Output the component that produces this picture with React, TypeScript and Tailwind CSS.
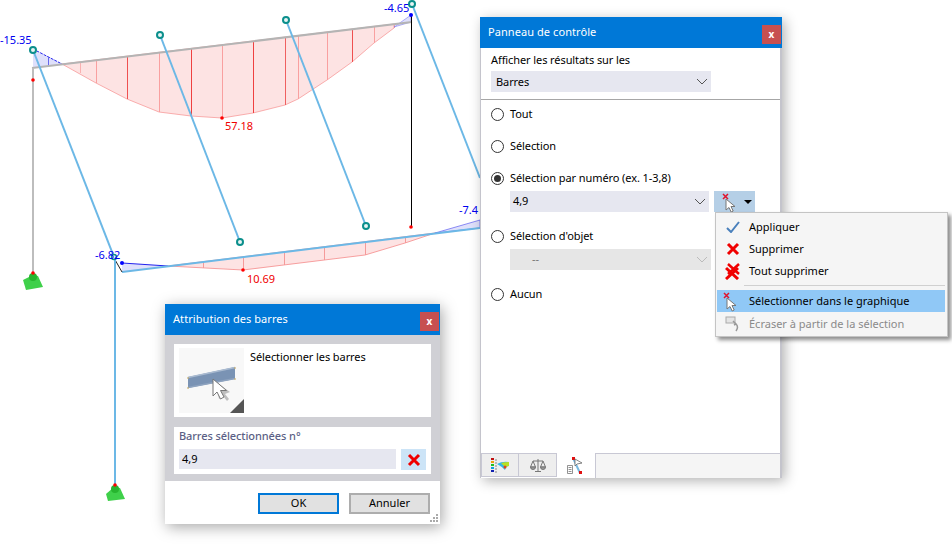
import React from "react";

const beamY = (x: number) => 68 - ((x - 32) * 46) / 380;
const lowY = (x: number) => 272 - ((x - 122) * 44) / 358;

function Chevron({ color = "#555" }: { color?: string }) {
  return (
    <svg width="12" height="7" viewBox="0 0 12 7" fill="none">
      <path d="M1 1l5 5 5-5" stroke={color} strokeWidth="1" />
    </svg>
  );
}

function Radio({ on }: { on?: boolean }) {
  return (
    <span className="w-[13px] h-[13px] rounded-full border border-[#333] bg-white flex items-center justify-center shrink-0">
      {on && <span className="w-[7px] h-[7px] rounded-full bg-[#333]" />}
    </span>
  );
}

function RadioRow({ label, on, className }: { label: string; on?: boolean; className: string }) {
  return (
    <div className={`flex items-center h-[16px] ml-[10px] gap-[6px] ${className}`}>
      <Radio on={on} />
      <span>{label}</span>
    </div>
  );
}

function CursorX() {
  return (
    <svg className="translate-y-[2px]" width="22" height="22" viewBox="0 0 22 22">
      <path d="M5 6v11l3-2.500 2.200 4.500 2-1-2.200-4.500h4z" fill="#fff" stroke="#777" strokeWidth="1" />
      <path d="M2 1l5 5M7 1L2 6" stroke="#e0142c" strokeWidth="1.500" />
    </svg>
  );
}

function RedX({ size = 14 }: { size?: number }) {
  return (
    <svg width={size} height={size} viewBox="0 0 14 14">
      <path d="M2 2l10 10M12 2L2 12" stroke="#f00000" strokeWidth="3" />
    </svg>
  );
}

function Diagram() {
  const topTicks: [number, string][] = [
    [80, "#f9b0b0"], [96, "#f9a0a0"], [127, "#ef5050"], [159, "#f9a0a0"], [191, "#ef4040"], [222, "#f9a0a0"],
    [253, "#ef4040"], [285, "#ef6060"], [298, "#f9a0a0"], [327, "#f9a0a0"], [352, "#ef5050"], [374, "#f9a0a0"], [394, "#f9a0a0"],
  ];
  const topCurve: Record<number, number> = { 80: 73, 96: 83, 127: 99, 159: 112, 191: 116, 222: 118, 253: 113, 285: 105, 298: 99, 327: 80, 352: 62, 374: 43, 394: 28 };
  const lowTicks: [number, number][] = [[203, 268], [243, 270], [284, 265], [324, 260], [365, 255], [405, 243]];
  const nodes = [[33, 50], [160, 35], [286, 20], [412, 4], [240, 242], [366, 226]];
  return (
    <svg className="absolute left-0 top-0" width="952" height="546" viewBox="0 0 952 546" fontFamily="'Noto Sans', sans-serif" fontSize="11">
      <polygon points="33,50 62,64 33,68" fill="#dfe0fb" />
      <path d="M33 49L62 64" stroke="#2222ee" strokeWidth="1" strokeDasharray="3 1" />
      <line x1="48.500" y1="57" x2="48.500" y2="66" stroke="#6666ee" />
      <polygon points="62,64 96,83 127,99 159,112 191,116 222,118 253,113 285,105 298,99 327,80 352,62 374,43 394,28 394,24" fill="#fde3e3" stroke="#f79a9a" strokeWidth="0.8" />
      {topTicks.map(([x, c]) => (
        <line key={x} x1={x + 0.5} x2={x + 0.5} y1={beamY(x)} y2={topCurve[x]} stroke={c} strokeWidth="1" />
      ))}
      <polygon points="394,27 411,15 411,22" fill="#dfe0fb" stroke="#6666ee" strokeWidth="0.5" />
      <line x1="32" y1="68" x2="412" y2="22" stroke="#b4b4b4" strokeWidth="2" />
      <line x1="33" y1="68" x2="33" y2="273" stroke="#bdbdbd" strokeWidth="2" />
      <line x1="411.500" y1="15" x2="411.500" y2="227" stroke="#000" strokeWidth="1" />
      <circle cx="33" cy="80" r="1.800" fill="#f00" />
      <circle cx="411" cy="227" r="1.800" fill="#f00" />
      <circle cx="411" cy="15" r="2" fill="#00f" />
      <circle cx="222" cy="118" r="1.800" fill="#f00" />

      <polygon points="122,263 168,266 122,272" fill="#dfe0fb" />
      <path d="M122 263L168 266" stroke="#2222ee" strokeWidth="1" />
      <polygon points="168,266 243,270 365,255 405,243 435,233" fill="#fde3e3" stroke="#f58a8a" strokeWidth="0.8" />
      {lowTicks.map(([x, y]) => (
        <line key={x} x1={x + 0.5} x2={x + 0.5} y1={lowY(x)} y2={y} stroke="#f59a9a" strokeWidth="1" />
      ))}
      <polygon points="435,233 480,220 480,228" fill="#dfe0fb" stroke="#4444ee" strokeWidth="0.6" />
      <line x1="122" y1="272" x2="480" y2="228" stroke="#6cb8e6" strokeWidth="2" />
      <line x1="114" y1="258" x2="122" y2="272" stroke="#222" strokeWidth="1" />
      <circle cx="122" cy="263" r="2" fill="#00f" />
      <circle cx="243" cy="270" r="1.800" fill="#f00" />

      <line x1="33" y1="50" x2="114" y2="257" stroke="#6cb8e6" strokeWidth="2" />
      <line x1="160" y1="35" x2="240" y2="242" stroke="#6cb8e6" strokeWidth="2" />
      <line x1="286" y1="20" x2="366" y2="226" stroke="#6cb8e6" strokeWidth="2" />
      <line x1="412" y1="4" x2="480" y2="178" stroke="#6cb8e6" strokeWidth="2" />
      <line x1="115" y1="257" x2="115" y2="486" stroke="#6cb8e6" strokeWidth="2" />

      <polygon points="23,280 33,275 38,276 43,287 26,290" fill="#3fd04a" />
      <circle cx="33" cy="277" r="4" fill="#27b52f" />
      <circle cx="33" cy="273" r="1.800" fill="#f00" />
      <polygon points="106,494 114,487 120,488 125,499 108,501" fill="#3fd04a" />
      <circle cx="115" cy="489" r="4" fill="#27b52f" />
      <circle cx="115" cy="485" r="1.800" fill="#f00" />

      {nodes.map(([x, y]) => (
        <circle key={x} cx={x} cy={y} r="3" fill="#e8f4f4" stroke="#0b8f8c" strokeWidth="2" />
      ))}
      <circle cx="114" cy="257" r="2.500" fill="#e8f4f4" stroke="#0b8f8c" strokeWidth="1.500" />

      <text x="0" y="44" fill="#0000f0">-15.35</text>
      <text x="384" y="12" fill="#0000f0">-4.65</text>
      <text x="95" y="259" fill="#0000f0">-6.82</text>
      <text x="459" y="214" fill="#0000f0">-7.4</text>
      <text x="225" y="130" fill="#f00000">57.18</text>
      <text x="247" y="283" fill="#f00000">10.69</text>
    </svg>
  );
}

function ControlPanel() {
  return (
    <div className="absolute left-[480px] top-[17px] w-[302px] h-[461px] flex flex-col shadow-[3px_3px_12px_rgba(0,0,0,0.3)] bg-white">
      <div className="h-[31px] bg-[#0078d7] flex items-center justify-between pl-2 pr-px text-white text-[11px] tracking-[0.07px] shrink-0">
        <span>Panneau de contrôle</span>
        <span className="w-[19px] h-[19px] bg-[#c75050] flex items-center justify-center text-[10px] font-bold mt-[3px]">x</span>
      </div>
      <div className="flex-1 flex flex-col border-l border-r-2 border-l-[#c4c4cc] border-r-[#c4c4cc] text-[11px] tracking-[-0.09px] text-black min-h-0">
        <div className="ml-[10px] mt-[4px] h-[16px] leading-[16px]">Afficher les résultats sur les</div>
        <div className="ml-[10px] mt-[3px] w-[220px] h-[21px] bg-[#e6e7f0] flex items-center justify-between pl-[5px] pr-[3px]">
          <span className="translate-y-px">Barres</span>
          <Chevron />
        </div>
        <div className="h-px bg-[#a6a6a6] mt-[7px]" />
        <RadioRow label="Tout" className="mt-[6px]" />
        <RadioRow label="Sélection" className="mt-[16px]" />
        <RadioRow label="Sélection par numéro (ex. 1-3,8)" on className="mt-[16px]" />
        <div className="flex ml-[29px] mt-[5px] gap-[5px]">
          <div className="w-[199px] h-[21px] bg-[#e6e7f0] flex items-center justify-between pl-[3px] pr-[3px]">
            <span>4,9</span>
            <Chevron />
          </div>
          <div className="w-[41px] h-[21px] bg-[#b5cfe6] flex items-center pl-[7px] gap-px">
            <CursorX />
            <span className="w-0 h-0 border-x-[4px] border-x-transparent border-t-[4px] border-t-black" />
          </div>
        </div>
        <RadioRow label="Sélection d'objet" className="mt-[16px]" />
        <div className="ml-[29px] mt-[5px] w-[201px] h-[21px] bg-[#e6e6e6] flex items-center justify-between pl-[22px] pr-[3px] text-[#777]">
          <span>--</span>
          <Chevron color="#bbb" />
        </div>
        <RadioRow label="Aucun" className="mt-[16px]" />
        <div className="flex-1" />
      </div>
      <div className="h-[25px] flex shrink-0 border-l border-[#c4c4cc]">
        <div className="w-[38px] h-[24px] bg-[#eeeeee] border border-[#c8c8d4] flex items-center justify-center">
          <svg width="18" height="16" viewBox="0 0 18 16">
            <rect x="0" y="1" width="3" height="2" fill="#c01010" />
            <rect x="0" y="4" width="3" height="2" fill="#f0a010" />
            <rect x="0" y="7" width="3" height="2" fill="#20c020" />
            <rect x="0" y="10" width="3" height="2" fill="#10a0e0" />
            <rect x="0" y="13" width="3" height="2" fill="#1020b0" />
            <path d="M4 3h2M4 6h2M4 9h2M4 12h2M4 15h2" stroke="#888" strokeWidth="1" />
            <path d="M6 7q5-3 12-2v4q-3 0-4 4q-4-4-8-6z" fill="#30b8e8" />
            <path d="M10 6q4-1 8-1v4q-3 0-4 3q-1-4-4-6z" fill="#b8e020" />
            <circle cx="14" cy="10" r="1.500" fill="#e04020" />
          </svg>
        </div>
        <div className="w-[38px] h-[24px] bg-[#eeeeee] border border-l-0 border-[#c8c8d4] flex items-center justify-center">
          <svg width="16" height="15" viewBox="0 0 16 15" fill="none" stroke="#777" strokeWidth="1">
            <path d="M8 1v12M3 3h10M3 3L.5 9h5zM13 3l-2.500 6h5z" />
            <path d="M.5 9a2.500 2.500 0 0 0 5 0zM10.500 9a2.500 2.500 0 0 0 5 0z" fill="#999" />
            <path d="M5 13.500h6" />
          </svg>
        </div>
        <div className="w-[38px] h-[25px] bg-white flex items-center justify-center">
          <svg width="20" height="20" viewBox="0 0 20 20">
            <path d="M1.500 9.500h5v8h-5z" fill="#fff" stroke="#777" strokeWidth="0.8" />
            <path d="M2.500 11.500h3M2.500 13.500h3M2.500 15.500h3" stroke="#777" strokeWidth="0.8" />
            <line x1="7" y1="2" x2="14" y2="17" stroke="#7ab8e0" strokeWidth="2" />
            <rect x="6" y="1" width="3" height="3" fill="#e01010" />
            <rect x="13" y="15" width="3" height="3" fill="#e01010" />
            <path d="M9 3l0 7 2-2 5-1z" fill="#fff" stroke="#666" strokeWidth="0.8" />
          </svg>
        </div>
        <div className="flex-1 bg-[#f5f5f5] border-t border-l border-[#c8c8d4] border-r-2 border-r-[#c4c4cc]" />
      </div>
    </div>
  );
}

function MenuItem({ icon, label, active, disabled }: { icon: React.ReactNode; label: string; active?: boolean; disabled?: boolean }) {
  return (
    <div className={`h-[22px] flex items-center ${active ? "bg-[#90c8f6]" : ""} ${disabled ? "text-[#8a8a8a]" : "text-black"}`}>
      <span className="w-[32px] flex justify-center shrink-0">{icon}</span>
      <span>{label}</span>
    </div>
  );
}

function Menu() {
  return (
    <div className="absolute left-[715px] top-[212px] w-[233px] h-[125px] bg-[#f5f5f5] border border-[#c4c4c4] shadow-[3px_3px_4px_rgba(0,0,0,0.45)] pl-px pr-[2px] pt-[3px] text-[11px]">
      <MenuItem
        label="Appliquer"
        icon={
          <svg width="14" height="12" viewBox="0 0 14 12" fill="none">
            <path d="M1 7l4 4 8-10" stroke="#4a80bc" strokeWidth="2" />
          </svg>
        }
      />
      <MenuItem label="Supprimer" icon={<RedX />} />
      <MenuItem
        label="Tout supprimer"
        icon={
          <svg width="16" height="17" viewBox="0 0 16 17">
            <path d="M3 1l11 10M14 1L3 11" stroke="#f00000" strokeWidth="2.500" />
            <path d="M1 5l12 11M13 5L1 16" stroke="#f00000" strokeWidth="3" />
          </svg>
        }
      />
      <div className="h-[8px] flex items-end ml-[27px]">
        <div className="h-px w-full bg-[#d0d0d0] mb-[4px]" />
      </div>
      <MenuItem label="Sélectionner dans le graphique" active icon={<CursorX />} />
      <div className="mt-px">
        <MenuItem
          label="Écraser à partir de la sélection"
          disabled
          icon={
            <svg width="16" height="16" viewBox="0 0 16 16" fill="none">
              <rect x="1" y="1" width="9" height="6" fill="#e4e4e4" stroke="#aaa" />
              <path d="M8 5l3 3-2 1M11 8q3 3 0 7" stroke="#999" strokeWidth="1.500" />
            </svg>
          }
        />
      </div>
    </div>
  );
}

function Dialog() {
  return (
    <div className="absolute left-[165px] top-[304px] w-[275px] h-[220px] flex flex-col bg-white shadow-[2px_3px_14px_rgba(0,0,0,0.35)] text-[11px] text-black">
      <div className="h-[31px] bg-[#0078d7] flex items-center justify-between pl-2 pr-px text-white text-[11px] tracking-[0.07px] shrink-0">
        <span>Attribution des barres</span>
        <span className="w-[19px] h-[19px] bg-[#c75050] flex items-center justify-center text-[10px] font-bold mt-[3px]">x</span>
      </div>
      <div className="h-[146px] bg-[#d0d0d5] px-[9px] pt-[9px] flex flex-col gap-[10px] shrink-0">
        <div className="h-[73px] bg-white flex items-start pl-[5px] pt-[4px]">
          <div className="w-[65px] h-[65px] bg-[#f8f8f8] relative shrink-0">
            <svg width="65" height="65" viewBox="0 0 65 65">
              <polygon points="9,29 56,19 56,31 9,40" fill="#7a93b4" />
              <path d="M9 29.500L56 19.500" stroke="#a9bad0" strokeWidth="1.500" />
              <path d="M9 39.500L56 30.500" stroke="#8ea3bf" strokeWidth="1.500" />
              <path d="M9 29v2M9 39v2M56 19v2M56 30v2" stroke="#c4a860" strokeWidth="1" />
              <path d="M37 34l3 17 4-3 4 5 2-2-4-5 5-2z" fill="#555" opacity="0.35" />
              <path d="M34 31v17l4-4 3.500 7 3.500-2-3.500-6.500h6z" fill="#fff" stroke="#777" strokeWidth="1" />
              <polygon points="65,51 65,65 51,65" fill="#555" />
            </svg>
          </div>
          <span className="ml-[6px] mt-[1px] tracking-[-0.09px]">Sélectionner les barres</span>
        </div>
        <div className="h-[47px] bg-white px-[5px] pt-[1px]">
          <div className="h-[16px] leading-[16px] text-[#5b5f85] font-medium tracking-[-0.09px]">Barres sélectionnées n°</div>
          <div className="flex mt-[5px] gap-[5px]">
            <div className="w-[217px] h-[20px] bg-[#e6e7f0] flex items-center pl-[3px]">4,9</div>
            <div className="w-[25px] h-[21px] bg-[#cce4f7] flex items-center justify-center">
              <RedX />
            </div>
          </div>
        </div>
      </div>
      <div className="flex-1 relative flex justify-end pt-[12px] pr-[10px] gap-[10px] text-[11px]">
        <div className="w-[81px] h-[21px] bg-[#e1e1e1] border-2 border-[#0078d7] flex items-center justify-center">OK</div>
        <div className="w-[81px] h-[21px] bg-[#e1e1e1] border-2 border-[#adadad] flex items-center justify-center">Annuler</div>
        <svg className="absolute right-px bottom-px" width="9" height="9" viewBox="0 0 9 9" fill="#aaa">
          <rect x="6" y="0" width="2" height="2" />
          <rect x="3" y="3" width="2" height="2" />
          <rect x="6" y="3" width="2" height="2" />
          <rect x="0" y="6" width="2" height="2" />
          <rect x="3" y="6" width="2" height="2" />
          <rect x="6" y="6" width="2" height="2" />
        </svg>
      </div>
    </div>
  );
}

export default function App() {
  return (
    <div className="relative w-[952px] h-[546px] bg-white overflow-hidden font-['Noto_Sans',sans-serif]">
      <Diagram />
      <ControlPanel />
      <Menu />
      <Dialog />
    </div>
  );
}
